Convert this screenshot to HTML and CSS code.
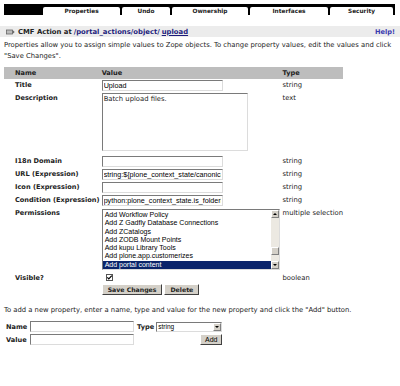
FILE: index.html
```html
<!DOCTYPE html>
<html lang="en">
<head>
    <meta charset="UTF-8">
    <title>CMF Action - Properties</title>
    <link rel="stylesheet" href="styles.css">
</head>
<body>
    <div class="tabs">
        <div class="tab" style="width:77px">Properties</div>
        <div class="tab" style="width:48px">Undo</div>
        <div class="tab" style="width:76px">Ownership</div>
        <div class="tab" style="width:78px">Interfaces</div>
        <div class="tab" style="width:63px">Security</div>
    </div>

    <div class="section-bar">
        <div class="title">
            <svg class="icon" width="9" height="6" viewBox="0 0 9 6">
                <rect x="0.5" y="1" width="6" height="4" fill="#bbb" stroke="#666" stroke-width="0.8"/>
                <path d="M6.5 1 L8.7 3 L6.5 5 Z" fill="#666"/>
            </svg>
            CMF Action at <a href="#" class="path">/portal_actions/object/</a><a href="#" class="path current">upload</a>
        </div>
        <a href="#" class="help">Help!</a>
    </div>

    <p class="intro">Properties allow you to assign simple values to Zope objects. To change property values, edit the values and click "Save Changes".</p>

    <form onsubmit="return false">
        <table class="props">
            <tr class="head">
                <td class="c-name">Name</td>
                <td class="c-value">Value</td>
                <td class="c-type">Type</td>
            </tr>
            <tr>
                <td class="label">Title</td>
                <td><input type="text" class="field" value="Upload"></td>
                <td class="type">string</td>
            </tr>
            <tr>
                <td class="label">Description</td>
                <td><textarea class="area">Batch upload files.</textarea></td>
                <td class="type">text</td>
            </tr>
            <tr>
                <td class="label">I18n Domain</td>
                <td><input type="text" class="field" value=""></td>
                <td class="type">string</td>
            </tr>
            <tr>
                <td class="label">URL (Expression)</td>
                <td><input type="text" class="field" value="string:${plone_context_state/canonical_object_url}/upload"></td>
                <td class="type">string</td>
            </tr>
            <tr>
                <td class="label">Icon (Expression)</td>
                <td><input type="text" class="field" value=""></td>
                <td class="type">string</td>
            </tr>
            <tr>
                <td class="label">Condition (Expression)</td>
                <td><input type="text" class="field" value="python:plone_context_state.is_folderish()"></td>
                <td class="type">string</td>
            </tr>
            <tr>
                <td class="label">Permissions</td>
                <td>
                    <div class="listbox">
                        <ul class="options">
                            <li>Add Workflow Policy</li>
                            <li>Add Z Gadfly Database Connections</li>
                            <li>Add ZCatalogs</li>
                            <li>Add ZODB Mount Points</li>
                            <li>Add kupu Library Tools</li>
                            <li>Add plone.app.customerizes</li>
                            <li class="selected">Add portal content</li>
                        </ul>
                        <div class="scrollbar">
                            <span class="arrow up"></span>
                            <span class="track"><span class="thumb"></span></span>
                            <span class="arrow down"></span>
                        </div>
                    </div>
                </td>
                <td class="type">multiple selection</td>
            </tr>
            <tr>
                <td class="label">Visible?</td>
                <td>
                    <span class="check">
                        <svg width="7" height="7" viewBox="0 0 7 7"><path d="M1.3 3.3 L2.8 4.9 L5.8 1.6" fill="none" stroke="#000" stroke-width="1.2"/></svg>
                    </span>
                </td>
                <td class="type">boolean</td>
            </tr>
            <tr>
                <td></td>
                <td class="actions">
                    <button class="btn">Save Changes</button>
                    <button class="btn">Delete</button>
                </td>
                <td></td>
            </tr>
        </table>
    </form>

    <p class="intro add-text">To add a new property, enter a name, type and value for the new property and click the "Add" button.</p>

    <form class="add-form" onsubmit="return false">
        <div class="add-row">
            <label class="label">Name</label>
            <input type="text" class="field short">
            <label class="label">Type</label>
            <div class="dropdown">
                <span>string</span>
                <span class="arrow down"></span>
            </div>
        </div>
        <div class="add-row">
            <label class="label">Value</label>
            <input type="text" class="field short">
            <button class="btn add">Add</button>
        </div>
    </form>
</body>
</html>
```

FILE: styles.css
```css
body {
    margin: 0;
    font-family: "DejaVu Sans", Verdana, sans-serif;
    font-size: 6.8px;
    color: #222;
    background: #fff;
}

.tabs {
    display: flex;
    align-items: flex-end;
    gap: 2px;
    height: 11px;
    margin: 4px 5px 0 4px;
    padding: 0 2px 0 39px;
    background: #000;
}

.tab {
    height: 8px;
    line-height: 8px;
    background: #fff;
    border-radius: 2px 2px 0 0;
    text-align: center;
    font-weight: bold;
    font-size: 5.8px;
}

.section-bar {
    display: flex;
    justify-content: space-between;
    align-items: center;
    height: 11px;
    margin-top: 11px;
    padding: 0 5px 0 6px;
    background: #ececec;
}

.title {
    font-weight: bold;
    font-size: 6.85px;
    display: flex;
    align-items: center;
    gap: 2px;
}

.icon {
    margin-right: 1px;
}

.path {
    color: #1c1c7c;
    text-decoration: none;
}

.path.current {
    text-decoration: underline;
}

.help {
    color: #3a3ab0;
    font-weight: bold;
    font-size: 6.6px;
    text-decoration: none;
}

.intro {
    margin: 3px 4px 0 4px;
    line-height: 11px;
}

.props {
    border-collapse: collapse;
    width: 339px;
    margin: 5px 0 0 4px;
}

.props td {
    padding: 0;
    vertical-align: top;
}

.head td {
    background: #bdbdbd;
    font-weight: bold;
    font-size: 6.6px;
    height: 12px;
    line-height: 12px;
}

.c-name {
    width: 88px;
    padding-left: 11px !important;
}

.c-value {
    width: 181px;
}

.label {
    font-weight: bold;
    font-size: 6.6px;
    padding-left: 11px !important;
    padding-top: 2px !important;
}

.type {
    padding-top: 2px !important;
    white-space: nowrap;
}

.field {
    box-sizing: border-box;
    display: block;
    width: 121px;
    height: 11px;
    margin: 1px 0 1px;
    padding: 0 1px;
    border: 1px solid;
    border-color: #7a7a7a #dcdcdc #dcdcdc #7a7a7a;
    font-family: "Liberation Sans", Arial, sans-serif;
    font-size: 7.2px;
    color: #000;
    outline: none;
}

.area {
    box-sizing: border-box;
    display: block;
    width: 146px;
    height: 58px;
    margin: 1px 0 4px;
    padding: 1px;
    border: 1px solid;
    border-color: #7a7a7a #dcdcdc #dcdcdc #7a7a7a;
    font-family: "DejaVu Sans", Verdana, sans-serif;
    font-size: 6.8px;
    resize: none;
    color: #222;
}

.listbox {
    box-sizing: border-box;
    display: flex;
    width: 178px;
    height: 61px;
    margin: 2px 0 2px;
    border: 1px solid;
    border-color: #7a7a7a #dcdcdc #dcdcdc #7a7a7a;
}

.options {
    flex: 1;
    list-style: none;
    margin: 0;
    padding: 1px 0 0;
    overflow: hidden;
    font-family: "Liberation Sans", Arial, sans-serif;
    font-size: 7px;
    color: #000;
}

.options li {
    height: 8.3px;
    line-height: 8.3px;
    padding-left: 2px;
    white-space: nowrap;
}

.options li.selected {
    background: #0a246a;
    color: #fff;
}

.scrollbar {
    display: flex;
    flex-direction: column;
    width: 8px;
    background: #ece9e2;
}

.track {
    flex: 1;
    position: relative;
}

.thumb {
    position: absolute;
    left: 0;
    top: 29px;
    width: 8px;
    height: 8px;
    box-sizing: border-box;
    background: #d4d0c8;
    border: 1px solid;
    border-color: #fff #808080 #808080 #fff;
}

.arrow {
    box-sizing: border-box;
    display: flex;
    align-items: center;
    justify-content: center;
    width: 8px;
    height: 8px;
    background: #d4d0c8;
    border: 1px solid;
    border-color: #fff #808080 #808080 #fff;
}

.arrow::after {
    content: "";
    border-left: 2px solid transparent;
    border-right: 2px solid transparent;
}

.arrow.up::after {
    border-bottom: 2px solid #000;
}

.arrow.down::after {
    border-top: 2px solid #000;
}

.check {
    display: block;
    box-sizing: border-box;
    width: 7px;
    height: 7px;
    margin: 2px 0 0 4px;
    border: 1px solid #555;
    background: #fff;
}

.check svg {
    display: block;
    margin: -1px 0 0 -1px;
}

.actions {
    display: flex;
    gap: 2px;
    padding: 2px 0 0 !important;
}

.btn {
    height: 11px;
    margin: 0;
    padding: 0 5px;
    background: #d4d0c8;
    border: 1px solid;
    border-color: #fff #404040 #404040 #fff;
    font-family: "DejaVu Sans", Verdana, sans-serif;
    font-size: 6.2px;
    font-weight: bold;
    color: #222;
}

.add-text {
    margin-top: 10px;
}

.add-form {
    margin: 4px 0 0 6px;
}

.add-row {
    display: flex;
    align-items: center;
    gap: 2px;
    height: 13px;
}

.add-row .label {
    padding: 0 !important;
    width: 22px;
}

.add-row .label + .field + .label {
    width: auto;
    margin-left: 1px;
}

.field.short {
    width: 104px;
    margin: 0;
}

.dropdown {
    box-sizing: border-box;
    display: flex;
    justify-content: space-between;
    align-items: center;
    width: 66px;
    height: 10px;
    padding-left: 1px;
    border: 1px solid;
    border-color: #7a7a7a #dcdcdc #dcdcdc #7a7a7a;
    font-family: "Liberation Sans", Arial, sans-serif;
    font-size: 6.5px;
    color: #000;
}

.btn.add {
    margin-left: 64px;
    padding: 0 4px;
    font-family: "Liberation Sans", Arial, sans-serif;
    font-size: 7px;
    font-weight: normal;
    color: #000;
}
```
